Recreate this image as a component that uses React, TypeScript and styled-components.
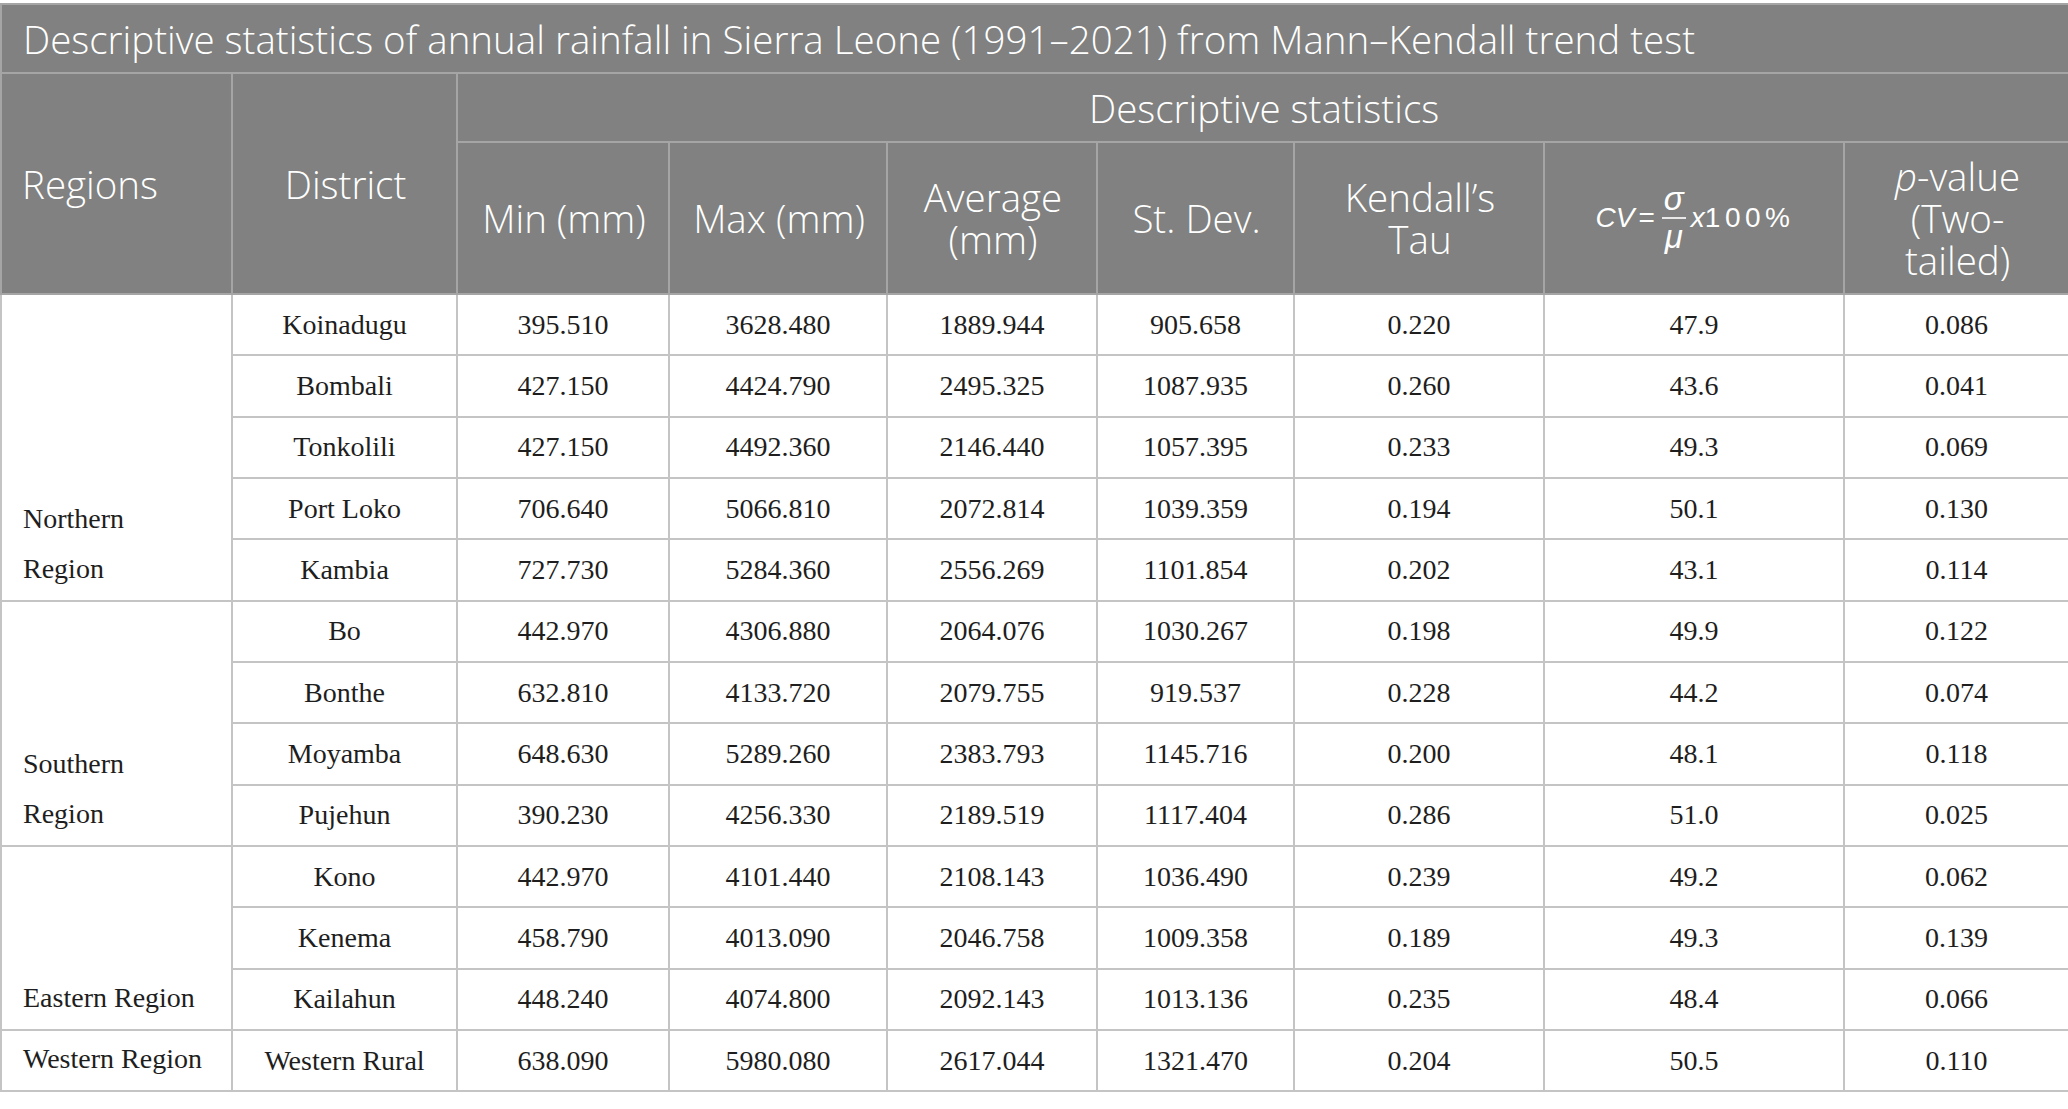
import React from 'react';
import styled, {createGlobalStyle} from 'styled-components';

const GlobalStyle = createGlobalStyle`
  html, body {
    margin: 0;
    padding: 0;
    background: #ffffff;
  }
`

type Row = { district: string, values: string[] }
type Group = { region: string[], rows: Row[] }

const groups: Group[] = [
    {
        region: ['Northern', 'Region'],
        rows: [
            {district: 'Koinadugu', values: ['395.510', '3628.480', '1889.944', '905.658', '0.220', '47.9', '0.086']},
            {district: 'Bombali', values: ['427.150', '4424.790', '2495.325', '1087.935', '0.260', '43.6', '0.041']},
            {district: 'Tonkolili', values: ['427.150', '4492.360', '2146.440', '1057.395', '0.233', '49.3', '0.069']},
            {district: 'Port Loko', values: ['706.640', '5066.810', '2072.814', '1039.359', '0.194', '50.1', '0.130']},
            {district: 'Kambia', values: ['727.730', '5284.360', '2556.269', '1101.854', '0.202', '43.1', '0.114']},
        ]
    },
    {
        region: ['Southern', 'Region'],
        rows: [
            {district: 'Bo', values: ['442.970', '4306.880', '2064.076', '1030.267', '0.198', '49.9', '0.122']},
            {district: 'Bonthe', values: ['632.810', '4133.720', '2079.755', '919.537', '0.228', '44.2', '0.074']},
            {district: 'Moyamba', values: ['648.630', '5289.260', '2383.793', '1145.716', '0.200', '48.1', '0.118']},
            {district: 'Pujehun', values: ['390.230', '4256.330', '2189.519', '1117.404', '0.286', '51.0', '0.025']},
        ]
    },
    {
        region: ['Eastern Region'],
        rows: [
            {district: 'Kono', values: ['442.970', '4101.440', '2108.143', '1036.490', '0.239', '49.2', '0.062']},
            {district: 'Kenema', values: ['458.790', '4013.090', '2046.758', '1009.358', '0.189', '49.3', '0.139']},
            {district: 'Kailahun', values: ['448.240', '4074.800', '2092.143', '1013.136', '0.235', '48.4', '0.066']},
        ]
    },
    {
        region: ['Western Region'],
        rows: [
            {district: 'Western Rural', values: ['638.090', '5980.080', '2617.044', '1321.470', '0.204', '50.5', '0.110']},
        ]
    },
]

const widths = [231, 225, 212, 218, 210, 197, 250, 300, 225]

export default function App() {
    return (
        <Page>
            <GlobalStyle/>
            <Table>
                <colgroup>
                    {widths.map((w, i) => <col key={i} style={{width: w}}/>)}
                </colgroup>
                <thead>
                <CaptionRow>
                    <CaptionCell colSpan={9}>
                        Descriptive statistics of annual rainfall in Sierra Leone (1991–2021) from Mann–Kendall trend test
                    </CaptionCell>
                </CaptionRow>
                <GroupRow>
                    <HeadCell rowSpan={2} $align="left">Regions</HeadCell>
                    <HeadCell rowSpan={2}>District</HeadCell>
                    <HeadCell colSpan={7}>Descriptive statistics</HeadCell>
                </GroupRow>
                <LabelRow>
                    <HeadCell>Min (mm)</HeadCell>
                    <HeadCell>Max (mm)</HeadCell>
                    <HeadCell>Average<br/>(mm)</HeadCell>
                    <HeadCell>St. Dev.</HeadCell>
                    <HeadCell>Kendall’s<br/>Tau</HeadCell>
                    <HeadCell>
                        <Formula>
                            <i>CV</i>
                            <Eq>=</Eq>
                            <Fraction>
                                <i>σ</i>
                                <FracBar/>
                                <i>μ</i>
                            </Fraction>
                            <Times><i>x</i>100%</Times>
                        </Formula>
                    </HeadCell>
                    <HeadCell><i>p</i>-value<br/>(Two-<br/>tailed)</HeadCell>
                </LabelRow>
                </thead>
                <tbody>
                {groups.map(g => g.rows.map((r, i) => (
                    <BodyRow key={r.district}>
                        {i === 0 && (
                            <RegionCell rowSpan={g.rows.length}>
                                {g.region.map((l, k) => <div key={k}>{l}</div>)}
                            </RegionCell>
                        )}
                        <DataCell>{r.district}</DataCell>
                        {r.values.map((v, k) => <DataCell key={k}>{v}</DataCell>)}
                    </BodyRow>
                )))}
                </tbody>
            </Table>
        </Page>
    )
}

const Page = styled.div`
  padding-top: 3px;
  width: 2068px;
`

const Table = styled.table`
  width: 2067px;
  border-collapse: collapse;
  table-layout: fixed;
  border: 2px solid #c4c4c4;
`

const CaptionRow = styled.tr`
  height: 69px;
`

const GroupRow = styled.tr`
  height: 69px;
`

const LabelRow = styled.tr`
  height: 152px;
`

const HeadCell = styled.th<{ $align?: string }>`
  background: #808180;
  color: #ffffff;
  border: 2px solid #a4a5a4;
  font-family: "Open Sans", "Noto Sans", sans-serif;
  font-weight: 300;
  font-size: 38.5px;
  line-height: 42px;
  text-align: ${p => p.$align || 'center'};
  padding: 0 18px 0 20px;
  vertical-align: middle;
  white-space: nowrap;

  i {
    font-style: italic;
  }
`

const CaptionCell = styled(HeadCell)`
  text-align: left;
  padding: 0 21px;
`

const Formula = styled.span`
  display: inline-flex;
  align-items: center;
  font-family: "Liberation Sans", Arial, sans-serif;
  font-weight: 400;
  font-size: 28px;
  line-height: 1;
`

const Eq = styled.span`
  margin: 0 7px 0 4px;
`

const Fraction = styled.span`
  display: inline-flex;
  flex-direction: column;
  align-items: center;
  margin-right: 5px;
  font-size: 33px;

  i {
    line-height: 36px;
  }
`

const FracBar = styled.span`
  display: block;
  width: 24px;
  height: 2px;
  background: #e8e8e8;
`

const Times = styled.span`
  letter-spacing: 4.5px;

  i {
    letter-spacing: 0;
  }
`

const BodyRow = styled.tr`
  height: 61.35px;
`

const DataCell = styled.td`
  border: 2px solid #c4c4c4;
  font-family: "Liberation Serif", "Times New Roman", serif;
  font-size: 28px;
  color: #1e1e1e;
  text-align: center;
  vertical-align: middle;
  padding: 0 8px;
`

const RegionCell = styled(DataCell)`
  text-align: left;
  vertical-align: bottom;
  padding: 0 20px 6px 21px;
  line-height: 50px;
`
